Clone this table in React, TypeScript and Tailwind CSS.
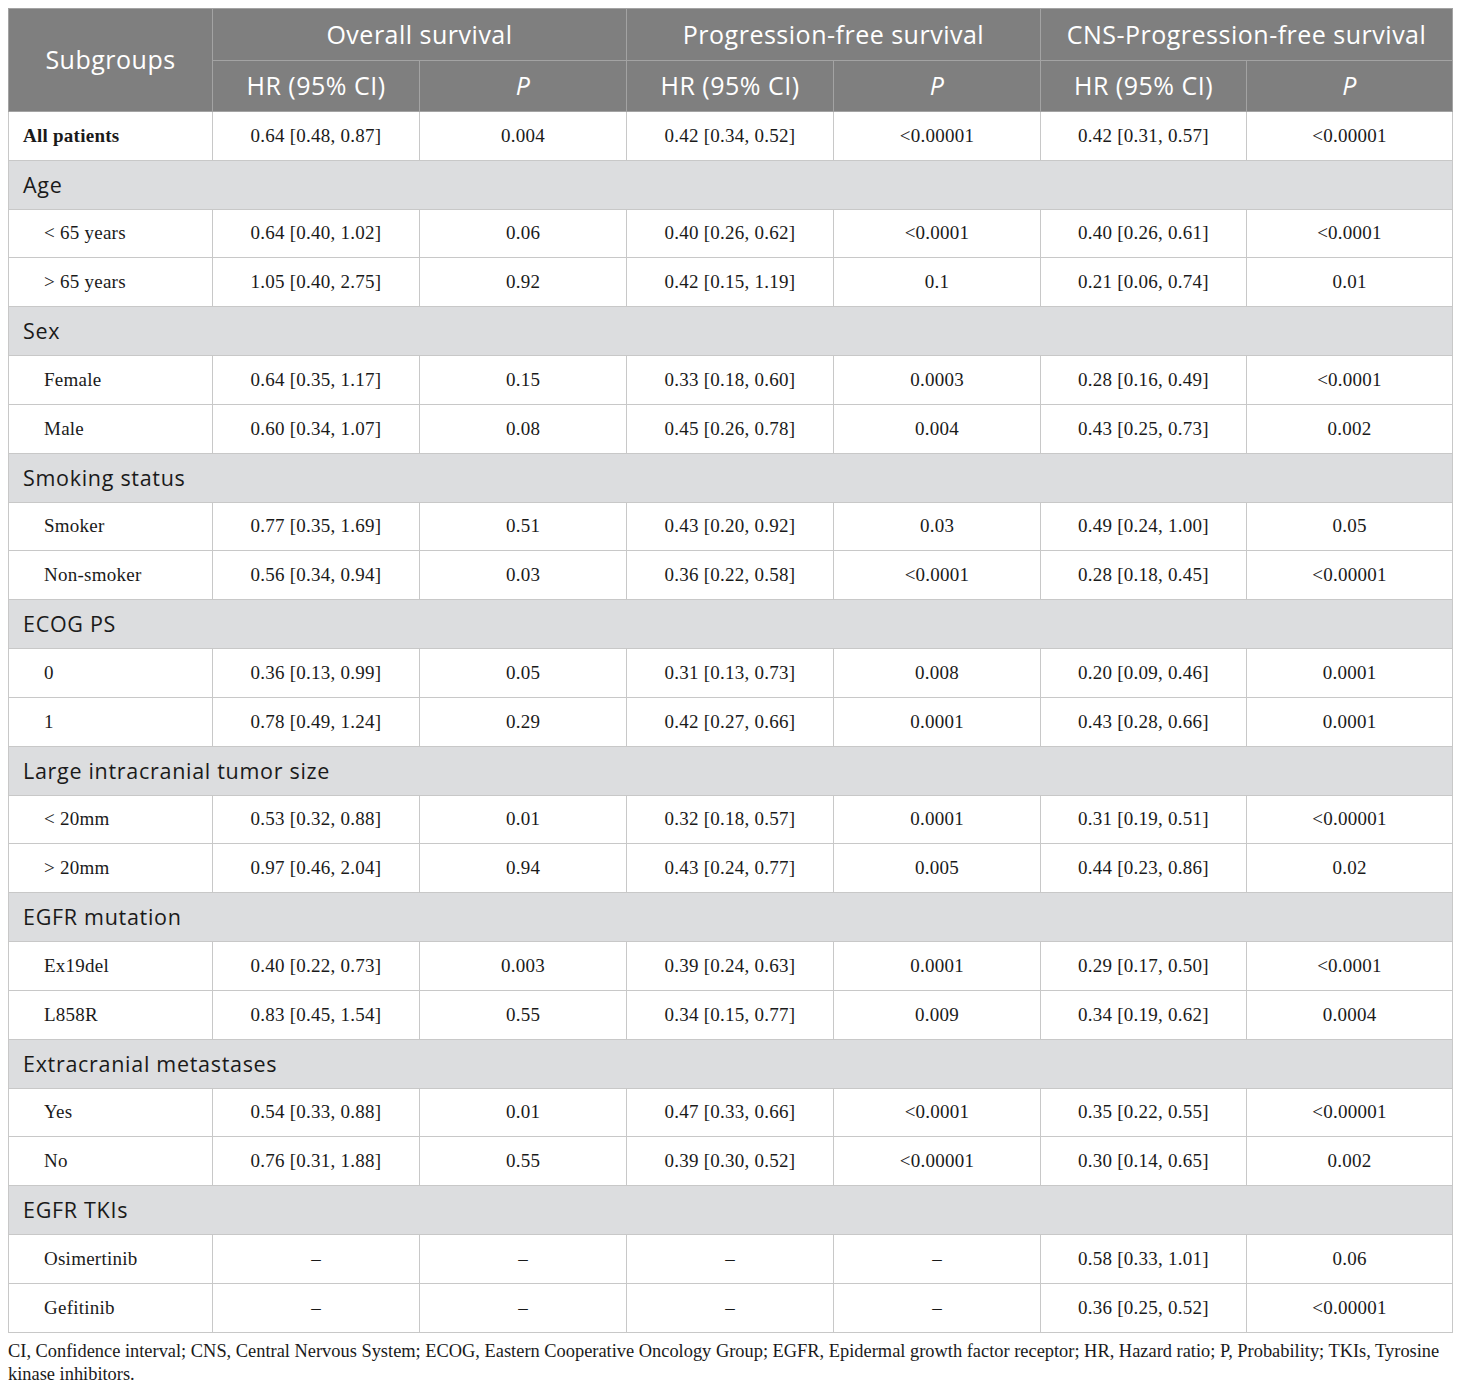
const rows: (string | string[])[] = [
  ['All patients', '0.64 [0.48, 0.87]', '0.004', '0.42 [0.34, 0.52]', '<0.00001', '0.42 [0.31, 0.57]', '<0.00001'],
  'Age',
  ['< 65 years', '0.64 [0.40, 1.02]', '0.06', '0.40 [0.26, 0.62]', '<0.0001', '0.40 [0.26, 0.61]', '<0.0001'],
  ['> 65 years', '1.05 [0.40, 2.75]', '0.92', '0.42 [0.15, 1.19]', '0.1', '0.21 [0.06, 0.74]', '0.01'],
  'Sex',
  ['Female', '0.64 [0.35, 1.17]', '0.15', '0.33 [0.18, 0.60]', '0.0003', '0.28 [0.16, 0.49]', '<0.0001'],
  ['Male', '0.60 [0.34, 1.07]', '0.08', '0.45 [0.26, 0.78]', '0.004', '0.43 [0.25, 0.73]', '0.002'],
  'Smoking status',
  ['Smoker', '0.77 [0.35, 1.69]', '0.51', '0.43 [0.20, 0.92]', '0.03', '0.49 [0.24, 1.00]', '0.05'],
  ['Non-smoker', '0.56 [0.34, 0.94]', '0.03', '0.36 [0.22, 0.58]', '<0.0001', '0.28 [0.18, 0.45]', '<0.00001'],
  'ECOG PS',
  ['0', '0.36 [0.13, 0.99]', '0.05', '0.31 [0.13, 0.73]', '0.008', '0.20 [0.09, 0.46]', '0.0001'],
  ['1', '0.78 [0.49, 1.24]', '0.29', '0.42 [0.27, 0.66]', '0.0001', '0.43 [0.28, 0.66]', '0.0001'],
  'Large intracranial tumor size',
  ['< 20mm', '0.53 [0.32, 0.88]', '0.01', '0.32 [0.18, 0.57]', '0.0001', '0.31 [0.19, 0.51]', '<0.00001'],
  ['> 20mm', '0.97 [0.46, 2.04]', '0.94', '0.43 [0.24, 0.77]', '0.005', '0.44 [0.23, 0.86]', '0.02'],
  'EGFR mutation',
  ['Ex19del', '0.40 [0.22, 0.73]', '0.003', '0.39 [0.24, 0.63]', '0.0001', '0.29 [0.17, 0.50]', '<0.0001'],
  ['L858R', '0.83 [0.45, 1.54]', '0.55', '0.34 [0.15, 0.77]', '0.009', '0.34 [0.19, 0.62]', '0.0004'],
  'Extracranial metastases',
  ['Yes', '0.54 [0.33, 0.88]', '0.01', '0.47 [0.33, 0.66]', '<0.0001', '0.35 [0.22, 0.55]', '<0.00001'],
  ['No', '0.76 [0.31, 1.88]', '0.55', '0.39 [0.30, 0.52]', '<0.00001', '0.30 [0.14, 0.65]', '0.002'],
  'EGFR TKIs',
  ['Osimertinib', '–', '–', '–', '–', '0.58 [0.33, 1.01]', '0.06'],
  ['Gefitinib', '–', '–', '–', '–', '0.36 [0.25, 0.52]', '<0.00001'],
]

const sans = "font-['Open_Sans',sans-serif]"
const serif = "font-['Liberation_Serif',serif]"
const th = 'border border-[#a3a3a3] font-normal'

export default function App() {
  return (
    <div className="bg-white p-2 w-[1460px] text-[#1a1a1a]">
      <table className="w-[1444px] table-fixed border-collapse">
        <colgroup>
          <col className="w-[204px]" />
          <col className="w-[207px]" />
          <col className="w-[207px]" />
          <col className="w-[207px]" />
          <col className="w-[207px]" />
          <col className="w-[206px]" />
          <col className="w-[206px]" />
        </colgroup>
        <thead className={`${sans} text-white text-[25px] tracking-[0.5px]`}>
          <tr className="h-[52px] bg-[#7f7f7f]">
            <th rowSpan={2} className={`${th} text-center`}>
              Subgroups
            </th>
            <th colSpan={2} className={th}>Overall survival</th>
            <th colSpan={2} className={th}>Progression-free survival</th>
            <th colSpan={2} className={th}>CNS-Progression-free survival</th>
          </tr>
          <tr className="h-[51px] bg-[#7f7f7f]">
            <th className={th}>HR (95% CI)</th>
            <th className={`${th} italic`}>P</th>
            <th className={th}>HR (95% CI)</th>
            <th className={`${th} italic`}>P</th>
            <th className={th}>HR (95% CI)</th>
            <th className={`${th} italic`}>P</th>
          </tr>
        </thead>
        <tbody>
          {rows.map((r, i) =>
            typeof r === 'string' ? (
              <tr key={i} className="h-[48.84px] bg-[#dcdddf]">
                <td
                  colSpan={7}
                  className={`${sans} text-[21.5px] tracking-[0.7px] pl-[14px] border border-[#c8c8c8]`}
                >
                  {r}
                </td>
              </tr>
            ) : (
              <tr key={i} className={`h-[48.84px] ${serif} text-[19px] tracking-[0.25px]`}>
                <td
                  className={`border border-[#c8c8c8] ${i === 0 ? 'pl-[14px] font-bold' : 'pl-[35px]'}`}
                >
                  {r[0]}
                </td>
                {r.slice(1).map((c, j) => (
                  <td key={j} className="border border-[#c8c8c8] text-center">
                    {c}
                  </td>
                ))}
              </tr>
            )
          )}
        </tbody>
      </table>
      <p className={`${serif} text-[18.4px] leading-[23px] mt-[7px]`}>
        CI, Confidence interval; CNS, Central Nervous System; ECOG, Eastern Cooperative Oncology Group; EGFR,
        Epidermal growth factor receptor; HR, Hazard ratio; P, Probability; TKIs, Tyrosine kinase inhibitors.
      </p>
    </div>
  )
}
